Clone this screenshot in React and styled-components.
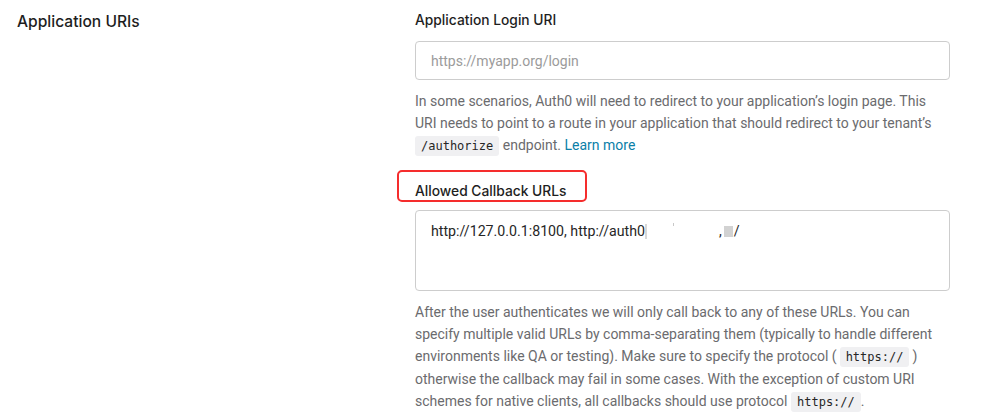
import React from "react";
import styled, { createGlobalStyle } from "styled-components";

const Global = createGlobalStyle`
  html, body { margin: 0; padding: 0; background: #fff; }
  body { font-family: Roboto, "Liberation Sans", sans-serif; -webkit-font-smoothing: antialiased; }
  * { box-sizing: border-box; }
`;

const Section = styled.section`
  display: grid;
  grid-template-columns: 415px 535px;
  width: 981px;
`;

const SectionTitle = styled.h2`
  margin: 0;
  padding: 12px 0 0 17px;
  font-family: Inter, "Noto Sans", sans-serif;
  font-size: 15.6px;
  font-weight: 500;
  line-height: 20px;
  color: #1e1e1e;
`;

const Fields = styled.div`
  display: flex;
  flex-direction: column;
  padding-top: 10px;
`;

const Field = styled.div`
  display: flex;
  flex-direction: column;
  margin-bottom: ${(p) => p.$gap || 0}px;
`;

const Label = styled.label`
  position: relative;
  display: block;
  font-family: Inter, "Noto Sans", sans-serif;
  font-size: 13.8px;
  font-weight: 500;
  line-height: 20px;
  color: #1e1e1e;
  margin-bottom: ${(p) => p.$mb}px;
  align-self: flex-start;
`;

const Highlight = styled.span`
  position: absolute;
  left: -18px;
  right: -20px;
  top: -11px;
  bottom: -1px;
  border: 2px solid #f52d2d;
  border-radius: 5px;
  pointer-events: none;
`;

const Input = styled.div`
  height: 39px;
  border: 1px solid #cdcdcd;
  border-radius: 4px;
  padding: 0 15px;
  display: flex;
  align-items: center;
  font-size: 14px;
  color: ${(p) => (p.$placeholder ? "#9b9b9b" : "#333")};
`;

const TextArea = styled.div`
  height: 81px;
  border: 1px solid #cdcdcd;
  border-radius: 4px;
  padding: 10px 15px;
  font-size: 14.2px;
  line-height: 20px;
  color: #262626;
  display: flex;
  align-items: flex-start;
`;

const Redacted = styled.span`
  display: inline-block;
  position: relative;
  width: ${(p) => p.$w}px;
  height: 16px;
  margin-top: 2px;
`;

const Caret = styled.span`
  position: absolute;
  left: 0;
  top: 1px;
  width: 2px;
  height: 15px;
  background: #d8d8d8;
`;

const Speck = styled.span`
  position: absolute;
  left: 28px;
  top: 0;
  width: 1px;
  height: 3px;
  background: #c8c8c8;
`;

const GreyBlock = styled.span`
  display: inline-block;
  width: 9px;
  height: 11px;
  margin: 5px 1px 0 2px;
  background: #d2d2d2;
`;

const Help = styled.p`
  margin: 10px 0 0;
  font-size: 14px;
  line-height: 22px;
  color: #6b6b6e;
`;

const Code = styled.code`
  font-family: "DejaVu Sans Mono", "Liberation Mono", monospace;
  font-size: 12px;
  color: #262626;
  background: #f0f0f2;
  border-radius: 3px;
  padding: 3px 6px;
  margin: 0 ${(p) => p.$mx || 0}px;
`;

const Link = styled.a`
  color: #0b80a8;
  text-decoration: none;
`;

export default function App() {
  return (
    <>
      <Global />
      <Section>
        <SectionTitle>Application URIs</SectionTitle>
        <Fields>
          <Field $gap={24}>
            <Label $mb={11}>Application Login URI</Label>
            <Input $placeholder>https://myapp.org/login</Input>
            <Help>
              In some scenarios, Auth0 will need to redirect to your application’s login page. This
              <br />
              URI needs to point to a route in your application that should redirect to your tenant’s
              <br />
              <Code>/authorize</Code> endpoint. <Link href="#">Learn more</Link>
            </Help>
          </Field>
          <Field>
            <Label $mb={9}>
              Allowed Callback URLs
              <Highlight />
            </Label>
            <TextArea>
              <span>http://127.0.0.1:8100, http://auth0</span>
              <Redacted $w={74}>
                <Caret />
                <Speck />
              </Redacted>
              <span>,</span>
              <GreyBlock />
              <span>/</span>
            </TextArea>
            <Help>
              After the user authenticates we will only call back to any of these URLs. You can
              <br />
              specify multiple valid URLs by comma-separating them (typically to handle different
              <br />
              environments like QA or testing). Make sure to specify the protocol (
              <Code $mx={3}>https://</Code>)
              <br />
              otherwise the callback may fail in some cases. With the exception of custom URI
              <br />
              schemes for native clients, all callbacks should use protocol <Code>https://</Code>.
            </Help>
          </Field>
        </Fields>
      </Section>
    </>
  );
}
